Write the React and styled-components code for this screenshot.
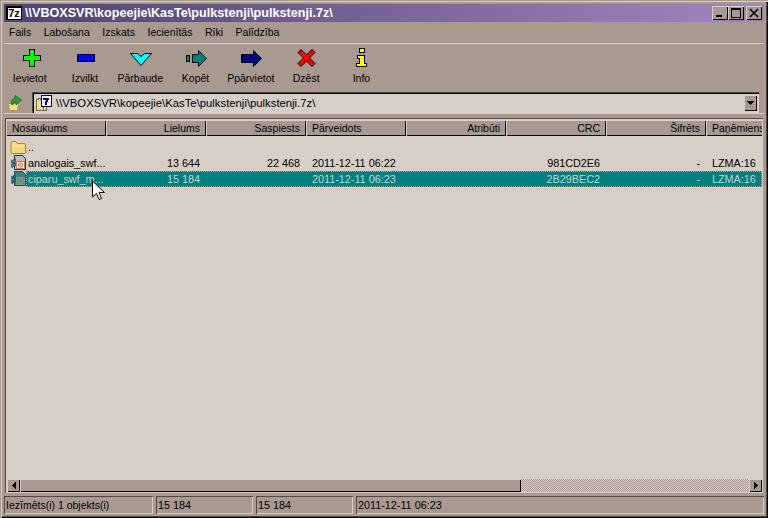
import React from 'react';
import styled, { createGlobalStyle } from 'styled-components';

const face = '#a89a90';
const paper = '#d6cec7';
const light = '#d6cec7';
const dark = '#54483f';

const GlobalStyle = createGlobalStyle`
  html, body { margin: 0; padding: 0; background: ${face}; }
  body { font-family: "Liberation Sans", Arial, sans-serif; font-size: 10.5px; color: #000; }
`;

const menus = ['Fails', 'Labošana', 'Izskats', 'Iecienītās', 'Rīki', 'Palīdzība'];

const columns = [
  { title: 'Nosaukums' },
  { title: 'Lielums', right: true },
  { title: 'Saspiests', right: true },
  { title: 'Pārveidots' },
  { title: 'Atribūti', right: true },
  { title: 'CRC', right: true },
  { title: 'Šifrēts', right: true },
  { title: 'Paņēmiens' },
];

const files = [
  { name: 'analogais_swf...', size: '13 644', packed: '22 468', date: '2011-12-11 06:22', crc: '981CD2E6' },
  { name: 'ciparu_swf_m...', size: '15 184', packed: '', date: '2011-12-11 06:23', crc: '2B29BEC2', selected: true },
];

const Win = styled.div`
  position: relative;
  width: 768px;
  height: 518px;
  box-sizing: border-box;
  padding: 4px;
  background: ${face};
  display: flex;
  flex-direction: column;
  overflow: hidden;
  box-shadow: inset 1px 1px 0 ${face}, inset 2px 2px 0 ${light}, inset -1px -1px 0 #000, inset -2px -2px 0 ${dark};
`;

const TitleBar = styled.div`
  height: 18px;
  flex: none;
  display: flex;
  align-items: center;
  padding: 0 2px;
  background: linear-gradient(90deg, #4d4470 0%, #a385bd 100%);
  color: #fff;
  font-weight: bold;
  font-size: 12.6px;
`;

const AppBadge = styled.span`
  width: 16px;
  height: 14px;
  margin-right: 3px;
  background: #000;
  display: flex;
  align-items: center;
  justify-content: center;
`;

const AppBadgeText = styled.span`
  background: #fff;
  color: #000;
  font-size: 11px;
  line-height: 11px;
  width: 13px;
  text-align: center;
  font-weight: bold;
`;

const TitleText = styled.span`
  flex: 1;
  white-space: nowrap;
`;

const WinButton = styled.span`
  width: 16px;
  height: 14px;
  margin-left: ${(p) => (p.$gap ? '2px' : '0')};
  background: ${face};
  box-shadow: inset 1px 1px 0 ${light}, inset -1px -1px 0 #000;
  display: flex;
  align-items: center;
  justify-content: center;
`;

const MenuBar = styled.div`
  height: 22px;
  flex: none;
  display: flex;
  align-items: center;
  padding: 0 0 1px 5px;
  box-sizing: border-box;
  gap: 12.5px;
  border-bottom: 1px solid ${light};
`;

const Toolbar = styled.div`
  height: 48px;
  flex: none;
  display: flex;
  margin-left: -2px;
`;

const ToolButton = styled.div`
  width: 55.3px;
  flex: none;
  display: flex;
  flex-direction: column;
  align-items: center;
  svg { margin: 4px 0 0 2px; display: block; }
`;

const ToolLabel = styled.span`
  margin-top: 4px;
  white-space: nowrap;
`;

const AddressRow = styled.div`
  height: 22px;
  flex: none;
  display: flex;
  align-items: flex-start;
  border-bottom: 1px solid ${light};
  box-sizing: border-box;
  svg { flex: none; }
`;

const UpIcon = styled.span`
  width: 28px;
  height: 20px;
  flex: none;
  padding: 3px 0 0 4px;
  box-sizing: border-box;
`;

const Combo = styled.div`
  width: 727px;
  height: 21px;
  box-sizing: border-box;
  padding: 2px;
  display: flex;
  background: ${paper};
  box-shadow: inset 1px 1px 0 ${dark}, inset 2px 2px 0 #000, inset -1px -1px 0 ${light};
`;

const ComboText = styled.span`
  flex: 1;
  display: flex;
  align-items: center;
  gap: 4px;
  padding-left: 2px;
  white-space: nowrap;
  font-size: 11.3px;
`;

const ComboButton = styled.span`
  width: 13px;
  height: 16px;
  margin: 1px 0 0;
  background: ${face};
  box-shadow: inset 1px 1px 0 ${light}, inset -1px -1px 0 #000;
  display: flex;
  align-items: center;
  justify-content: center;
`;

const ListFrame = styled.div`
  flex: 1;
  min-height: 0;
  margin: 4px 0 0 1px;
  width: 758px;
  box-sizing: border-box;
  padding: 2px 1px 1px 1px;
  background: ${paper};
  display: flex;
  flex-direction: column;
  box-shadow: inset 1px 1px 0 ${dark}, inset -1px -1px 0 ${light};
`;

const HeaderRow = styled.div`
  height: 16px;
  flex: none;
  display: flex;
  overflow: hidden;
`;

const HeaderCell = styled.div`
  width: 100px;
  flex: none;
  box-sizing: border-box;
  padding: 0 6px;
  line-height: 16px;
  background: ${face};
  text-align: ${(p) => (p.$right ? 'right' : 'left')};
  white-space: nowrap;
  overflow: hidden;
  box-shadow: inset 1px 1px 0 ${light}, inset -1px -1px 0 #000;
`;

const Rows = styled.div`
  flex: 1;
  padding-top: 3px;
  min-height: 0;
  overflow: hidden;
  font-size: 10.8px;
`;

const Row = styled.div`
  height: 16px;
  display: flex;
  align-items: center;
`;

const IconSlot = styled.span`
  width: 20px;
  height: 16px;
  flex: none;
  display: flex;
  align-items: center;
  justify-content: flex-end;
`;

const RowBody = styled.div`
  flex: 1;
  height: 16px;
  display: flex;
  line-height: 16px;
  white-space: nowrap;
  overflow: hidden;
  background: ${(p) => (p.$selected ? '#008080' : 'transparent')};
  color: ${(p) => (p.$selected ? paper : '#000')};
  outline: ${(p) => (p.$selected ? '1px dotted #f08a70' : 'none')};
  outline-offset: -1px;
`;

const NameCell = styled.span`
  width: 80px;
  flex: none;
  padding-left: 2px;
  box-sizing: border-box;
`;

const Cell = styled.span`
  width: 100px;
  flex: none;
  box-sizing: border-box;
  padding: 0 6px;
  text-align: ${(p) => (p.$right ? 'right' : 'left')};
`;

const ScrollBar = styled.div`
  height: 13px;
  flex: none;
  display: flex;
  padding: 0 0 0 1px;
`;

const ScrollButton = styled.span`
  width: 13px;
  flex: none;
  background: ${face};
  box-shadow: inset 1px 1px 0 ${light}, inset -1px -1px 0 #000;
  display: flex;
  align-items: center;
  justify-content: center;
`;

const ScrollThumb = styled.span`
  width: 501px;
  flex: none;
  background: ${face};
  box-shadow: inset 1px 1px 0 ${light}, inset -1px -1px 0 #000;
`;

const ScrollTrack = styled.span`
  flex: 1;
  background-image: conic-gradient(${paper} 25%, ${face} 0 50%, ${paper} 0 75%, ${face} 0);
  background-size: 2px 2px;
`;

const StatusBar = styled.div`
  height: 18px;
  flex: none;
  margin-top: 3px;
  display: flex;
  gap: 3px;
`;

const Pane = styled.div`
  width: ${(p) => p.$width};
  flex: ${(p) => (p.$fill ? '1' : 'none')};
  box-sizing: border-box;
  padding-left: 2px;
  line-height: 18px;
  font-size: ${(p) => (p.$wide ? '10.8px' : '10.5px')};
  white-space: nowrap;
  box-shadow: inset 1px 1px 0 ${dark}, inset -1px -1px 0 ${light};
`;

const Pointer = styled.svg`
  position: absolute;
  left: 91px;
  top: 180px;
`;

const Plus = () => (
  <svg width="22" height="20" viewBox="0 0 22 20" shapeRendering="crispEdges">
    <path d="M9.500 1.500h5v6h6v5h-6v6h-5v-6h-6v-5h6z" fill="#00ff00" stroke="#000" strokeWidth="1.500" />
  </svg>
);
const Minus = () => (
  <svg width="22" height="20" viewBox="0 0 22 20" shapeRendering="crispEdges">
    <path d="M2.500 6.500h17v7h-17z" fill="#0000ff" stroke="#000" />
  </svg>
);
const Check = () => (
  <svg width="22" height="20" viewBox="0 0 22 20">
    <path d="M.5 5.500h7l3.500 3 3.500-3h7L11 17.500z" fill="#00ffff" stroke="#000" />
  </svg>
);
const Copy = () => (
  <svg width="22" height="20" viewBox="0 0 22 20">
    <path d="M.5 7.500h3v6h-3z" fill="#008080" stroke="#000" />
    <path d="M6.500 6.500h6v-4l8 8-8 8v-4h-6z" fill="#008080" stroke="#000" />
  </svg>
);
const Move = () => (
  <svg width="22" height="20" viewBox="0 0 22 20">
    <path d="M.5 6.500h12v-4l8 8-8 8v-4H.5z" fill="#000080" stroke="#000" />
  </svg>
);
const Cross = () => (
  <svg width="22" height="20" viewBox="0 0 22 20">
    <path d="M5 1.500L10.500 7 16 1.500 19 4.500 13.500 10 19 15.500 16 18.500 10.500 13 5 18.500 2 15.500 7.500 10 2 4.500z" fill="#ff0000" stroke="#000" />
  </svg>
);
const Info = () => (
  <svg width="22" height="20" viewBox="0 0 22 20" shapeRendering="crispEdges">
    <path d="M8.500.5h5v4h-5z M6.500 7.500h7v8h2v3h-10v-3h3v-5h-2z" fill="#ffff00" stroke="#000" />
  </svg>
);

const tools = [
  ['Ievietot', Plus],
  ['Izvilkt', Minus],
  ['Pārbaude', Check],
  ['Kopēt', Copy],
  ['Ppārvietot', Move],
  ['Dzēst', Cross],
  ['Info', Info],
];

const FolderSmall = () => (
  <svg width="16" height="14" viewBox="0 0 16 14">
    <path d="M1 3.500q0-2 2-2h3l1.500 2H14q1.500 0 1.500 1.500v7q0 1.500-1.500 1.500H2.500q-1.500 0-1.500-1.500z" fill="#f4d77a" stroke="#a8862e" />
    <path d="M2 6h13" stroke="#fff0b0" />
  </svg>
);

const ArchiveIcon = ({ selected }) => {
  const c = selected
    ? { body: '#3a7f86', line: '#1e4d55', doc: '#4f9a98', mark: '#8a9a70', side: '#1f6a78' }
    : { body: '#b9c2cc', line: '#26323e', doc: '#ffffff', mark: '#e8703a', side: '#4d7f96' };
  return (
    <svg width="15" height="16" viewBox="0 0 15 16">
      <path d="M3.500.5h8l3 3v11h-11z" fill={c.body} stroke={c.line} />
      <path d="M.5 5.500l4-1.500v3l-4 1.500zM.5 9.500l4-1.500v3l-4 1.500z" fill={c.side} stroke={c.line} strokeWidth=".6" />
      <rect x="5.500" y="6.500" width="8" height="7" fill={c.doc} stroke={c.mark} />
      <circle cx="9.500" cy="10" r="2.200" fill={selected ? c.doc : '#f2c2a0'} stroke={c.mark} />
    </svg>
  );
};

const ComboIcon = () => (
  <svg width="16" height="16" viewBox="0 0 16 16" shapeRendering="crispEdges">
    <path d="M.5 4.500h2v-1h2v1h3v11H.5z M.5 15.500h10v-4" fill="#f2dc8c" stroke="#7a6c48" />
    <path d="M5.500.5h10v11h-10z" fill="#fff" stroke="#000080" />
    <path d="M7 2.500h6v2h-1v2h-1v3H9V6h1V4.500H7z" fill="#000080" />
  </svg>
);

const UpFolder = () => (
  <svg width="15" height="16" viewBox="0 0 15 16">
    <path d="M.5 8.500h10l-1 7H1.500z" fill="#f3dc88" stroke="#b09a50" />
    <path d="M3 9q0-5 4-6V.5l6.500 4.500L8 10V7q-3 0-3.500 3z" fill="#2f9a3a" stroke="#14601f" strokeWidth=".7" />
  </svg>
);

const App = () => (
  <Win>
    <GlobalStyle />
    <TitleBar>
      <AppBadge>
        <AppBadgeText>7z</AppBadgeText>
      </AppBadge>
      <TitleText>\\VBOXSVR\kopeejie\KasTe\pulkstenji\pulkstenji.7z\</TitleText>
      <WinButton>
        <svg width="16" height="14" shapeRendering="crispEdges"><path d="M4 9h6v2H4z" fill="#000" /></svg>
      </WinButton>
      <WinButton>
        <svg width="16" height="14" shapeRendering="crispEdges"><path d="M3.500 2.500h9v9h-9z M3 3.500h10" fill="none" stroke="#000" /></svg>
      </WinButton>
      <WinButton $gap>
        <svg width="16" height="14"><path d="M4 3l8 8M12 3l-8 8" stroke="#000" strokeWidth="1.600" /></svg>
      </WinButton>
    </TitleBar>
    <MenuBar>
      {menus.map((m) => <span key={m}>{m}</span>)}
    </MenuBar>
    <Toolbar>
      {tools.map(([label, Icon]) => (
        <ToolButton key={label}>
          <Icon />
          <ToolLabel>{label}</ToolLabel>
        </ToolButton>
      ))}
    </Toolbar>
    <AddressRow>
      <UpIcon><UpFolder /></UpIcon>
      <Combo>
        <ComboText>
          <ComboIcon />
          \\VBOXSVR\kopeejie\KasTe\pulkstenji\pulkstenji.7z\
        </ComboText>
        <ComboButton>
          <svg width="7" height="4" shapeRendering="crispEdges"><path d="M0 0h7L3.500 4z" fill="#000" /></svg>
        </ComboButton>
      </Combo>
    </AddressRow>
    <ListFrame>
      <HeaderRow>
        {columns.map((c) => <HeaderCell key={c.title} $right={c.right}>{c.title}</HeaderCell>)}
      </HeaderRow>
      <Rows>
        <Row>
          <IconSlot><FolderSmall /></IconSlot>
          <RowBody><NameCell>..</NameCell></RowBody>
        </Row>
        {files.map((f) => (
          <Row key={f.name}>
            <IconSlot><ArchiveIcon selected={f.selected} /></IconSlot>
            <RowBody $selected={f.selected}>
              <NameCell>{f.name}</NameCell>
              <Cell $right>{f.size}</Cell>
              <Cell $right>{f.packed}</Cell>
              <Cell>{f.date}</Cell>
              <Cell $right />
              <Cell $right>{f.crc}</Cell>
              <Cell $right>-</Cell>
              <Cell>LZMA:16</Cell>
            </RowBody>
          </Row>
        ))}
      </Rows>
      <ScrollBar>
        <ScrollButton>
          <svg width="4" height="7" shapeRendering="crispEdges"><path d="M4 0v7L0 3.500z" fill="#000" /></svg>
        </ScrollButton>
        <ScrollThumb />
        <ScrollTrack />
        <ScrollButton>
          <svg width="4" height="7" shapeRendering="crispEdges"><path d="M0 0v7l4-3.500z" fill="#000" /></svg>
        </ScrollButton>
      </ScrollBar>
    </ListFrame>
    <StatusBar>
      <Pane $width="149px">Iezīmēts(i) 1 objekts(i)</Pane>
      <Pane $width="97px" $wide>15 184</Pane>
      <Pane $width="97px" $wide>15 184</Pane>
      <Pane $fill $wide>2011-12-11 06:23</Pane>
    </StatusBar>
    <Pointer width="15" height="22" viewBox="0 0 15 22">
      <path d="M1.500 1v16l4-3.500 2.500 6 2.500-1-2.500-6h5.500z" fill="#fff" stroke="#000" />
    </Pointer>
  </Win>
);

export default App;
